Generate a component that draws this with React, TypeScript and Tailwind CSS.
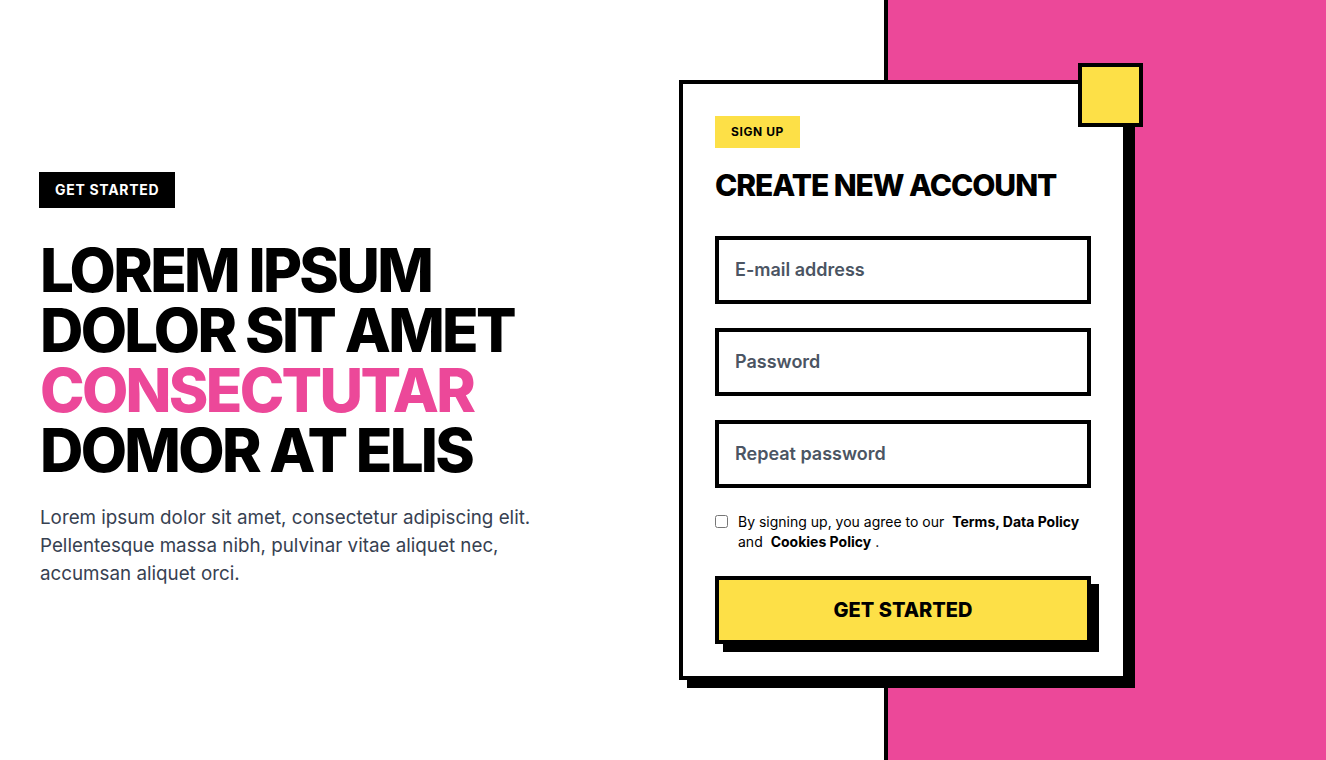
import React from 'react';

const YELLOW = 'bg-[#fde047]';

const Field: React.FC<{ placeholder: string; type?: string }> = ({ placeholder, type = 'text' }) => (
    <input
        type={type}
        placeholder={placeholder}
        className="block w-full border-4 border-black bg-white px-4 py-4 text-lg leading-7 font-semibold text-black placeholder:text-[#4b5563] outline-none"
    />
);

export default function App() {
    return (
        <div
            className="h-[760px] w-full overflow-hidden bg-[linear-gradient(to_right,#ffffff_66.6667%,#000000_66.6667%,#000000_calc(66.6667%_+_4px),#ec4899_calc(66.6667%_+_4px))]"
            style={{ fontFamily: 'Inter, "Noto Sans", sans-serif' }}
        >
            <div className="grid h-full grid-cols-2">
                {/* intro */}
                <div className="flex flex-col justify-center pl-10">
                    <div>
                        <span className="-ml-px inline-block bg-black px-4 py-2 text-sm leading-5 font-bold tracking-wider text-white">
                            GET STARTED
                        </span>
                    </div>
                    <h1 className="mt-8 text-[60px] leading-[60px] font-extrabold tracking-[-0.045em] text-black">
                        LOREM IPSUM
                        <br />
                        DOLOR SIT AMET
                        <br />
                        <span className="text-[#ec4899]">CONSECTUTAR</span>
                        <br />
                        DOMOR AT ELIS
                    </h1>
                    <p className="mt-6 max-w-[515px] text-[18.8px] leading-7 text-[#374151]">
                        Lorem ipsum dolor sit amet, consectetur adipiscing elit. Pellentesque massa nibh, pulvinar vitae
                        aliquet nec, accumsan aliquet orci.
                    </p>
                </div>

                {/* sign up card */}
                <div className="flex items-center">
                    <div className="relative ml-4 w-[448px] border-4 border-black bg-white p-8 shadow-[8px_8px_0_0_#000]">
                        <div className={`absolute -top-[21px] -right-5 h-16 w-[65px] border-4 border-black ${YELLOW}`} />

                        <span className={`inline-block px-4 py-2 text-xs leading-4 font-bold tracking-wider text-black ${YELLOW}`}>
                            SIGN UP
                        </span>
                        <h2 className="mt-[19px] mb-[33px] text-[30px] leading-9 font-extrabold tracking-[-0.035em] text-black">
                            CREATE NEW ACCOUNT
                        </h2>

                        <div className="flex flex-col gap-6">
                            <Field placeholder="E-mail address" type="email" />
                            <Field placeholder="Password" type="password" />
                            <Field placeholder="Repeat password" type="password" />
                        </div>

                        <label className="mt-6 flex items-start gap-[10px] text-sm leading-5 text-black">
                            <input type="checkbox" className="mt-[3px] h-[13px] w-[13px] shrink-0" />
                            <span>
                                By signing up, you agree to our <b className="mx-1 font-bold">Terms, Data Policy</b> and{' '}
                                <b className="mx-1 font-bold">Cookies Policy</b>.
                            </span>
                        </label>

                        <button
                            className={`mt-6 block w-full border-4 border-black py-4 text-xl leading-7 font-extrabold text-black shadow-[8px_8px_0_0_#000] ${YELLOW}`}
                        >
                            GET STARTED
                        </button>
                    </div>
                </div>
            </div>
        </div>
    );
}
